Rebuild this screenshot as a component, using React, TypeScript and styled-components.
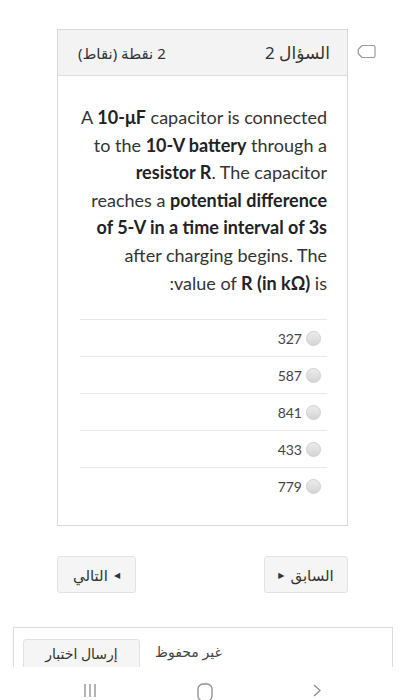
import React from "react";
import styled, { createGlobalStyle } from "styled-components";

const Global = createGlobalStyle`
  html, body { margin: 0; padding: 0; background: #fff; }
  body { font-family: Lato, "DejaVu Sans", sans-serif; color: #333; }
`;

const Page = styled.div`
  width: 405px;
  height: 700px;
  overflow: hidden;
  display: flex;
  flex-direction: column;
  background: #fff;
`;

const QuestionRow = styled.div`
  display: flex;
  align-items: flex-start;
  padding: 29px 0 0 57px;
  gap: 9px;
`;

const Card = styled.div`
  width: 291px;
  box-sizing: border-box;
  border: 1px solid #d9d9d9;
  background: #fff;
`;

const CardHeader = styled.div`
  direction: rtl;
  height: 45px;
  background: #f3f3f3;
  border-bottom: 1px solid #dedede;
  display: flex;
  align-items: center;
  justify-content: space-between;
  padding: 0 17px 0 20px;
`;

const QTitle = styled.span`
  font-family: "Noto Sans", "DejaVu Sans", sans-serif;
  font-size: 17px;
  color: #333;
`;

const QPoints = styled.span`
  font-family: "Noto Sans", "DejaVu Sans", sans-serif;
  font-size: 15px;
  color: #333;
`;

const FlagBox = styled.div`
  padding-top: 15px;
  color: #9a9a9a;
  display: flex;
`;

const QText = styled.p`
  text-align: right;
  margin: 0;
  padding: 28px 20px 0 12px;
  font-size: 18px;
  line-height: 27.6px;
  color: #333;
  b { font-weight: 700; color: #222; }
`;

const Options = styled.div`
  margin: 22px 20px 21px 22px;
`;

const Option = styled.label`
  direction: rtl;
  display: flex;
  align-items: center;
  box-sizing: border-box;
  height: 37px;
  border-top: 1px solid #e8e8e8;
  padding-right: 6px;
  gap: 4px;
  font-size: 14px;
  color: #444;
`;

const Radio = styled.span`
  width: 15px;
  height: 15px;
  border-radius: 50%;
  box-sizing: border-box;
  border: 1px solid #cfcfcf;
  background: linear-gradient(#ececec, #d4d4d4);
`;

const NavRow = styled.div`
  display: flex;
  justify-content: space-between;
  padding: 30px 57px 0 57px;
`;

const NavButton = styled.button<{ $w: number }>`
  width: ${(p) => p.$w}px;
  height: 37px;
  box-sizing: border-box;
  border: 1px solid #e2e2e2;
  border-radius: 3px;
  background: #f5f5f5;
  display: flex;
  align-items: center;
  justify-content: center;
  gap: 6px;
  font-family: "Noto Sans", "DejaVu Sans", sans-serif;
  font-size: 15px;
  color: #333;
  padding: 0;
`;

const Tri = styled.span`
  font-size: 8px;
  color: #333;
`;

const Footer = styled.div`
  margin: 34px 12px 0 13px;
  height: 42px;
  box-sizing: border-box;
  border: 1px solid #dcdcdc;
  border-bottom: none;
  display: flex;
  align-items: flex-start;
  padding: 11px 0 0 9px;
  gap: 15px;
  overflow: hidden;
`;

const SubmitButton = styled.button`
  width: 117px;
  height: 40px;
  box-sizing: border-box;
  border: 1px solid #e2e2e2;
  border-radius: 3px;
  background: #f5f5f5;
  font-family: "Noto Sans", "DejaVu Sans", sans-serif;
  font-size: 14px;
  line-height: 20px;
  color: #333;
  padding: 0 0 10px 0;
  direction: rtl;
`;

const Unsaved = styled.span`
  font-family: "Noto Sans", "DejaVu Sans", sans-serif;
  font-size: 14px;
  line-height: 20px;
  color: #444;
  padding-top: 3px;
  direction: rtl;
`;

const SystemBar = styled.div`
  flex: 1;
  background: #fff;
  display: flex;
  justify-content: space-between;
  align-items: flex-start;
  padding: 15px 82px 0 82px;
  color: #8c8c8c;
`;

const options = ["327", "587", "841", "433", "779"];

export default function App() {
  return (
    <Page>
      <Global />
      <QuestionRow>
        <Card>
          <CardHeader>
            <QTitle>السؤال 2</QTitle>
            <QPoints>2 نقطة (نقاط)</QPoints>
          </CardHeader>
          <QText>
            A <b>10-μF</b> capacitor is connected
            <br />
            to the <b>10-V battery</b> through a
            <br />
            <b>resistor R</b>. The capacitor
            <br />
            reaches a <b>potential difference</b>
            <br />
            <b>of 5-V in a time interval of 3s</b>
            <br />
            after charging begins. The
            <br />
            :value of <b>R (in kΩ)</b> is
          </QText>
          <Options>
            {options.map((o) => (
              <Option key={o}>
                <Radio />
                <span>{o}</span>
              </Option>
            ))}
          </Options>
        </Card>
        <FlagBox>
          <svg width="19" height="15" viewBox="0 0 19 15" fill="none">
            <path
              d="M5 1.5 H16.5 a1.5 1.5 0 0 1 1.5 1.5 V12 a1.5 1.5 0 0 1 -1.5 1.5 H5 L1.2 9.5 V5.5 Z"
              stroke="currentColor"
              strokeWidth="1.2"
              strokeLinejoin="round"
            />
          </svg>
        </FlagBox>
      </QuestionRow>
      <NavRow>
        <NavButton $w={79}>
          <span>التالي</span>
          <Tri>◀</Tri>
        </NavButton>
        <NavButton $w={84}>
          <Tri>▶</Tri>
          <span>السابق</span>
        </NavButton>
      </NavRow>
      <Footer>
        <SubmitButton>إرسال اختبار</SubmitButton>
        <Unsaved>غير محفوظ</Unsaved>
      </Footer>
      <SystemBar>
        <svg width="16" height="16" viewBox="0 0 16 16">
          <path d="M3 2 V15 M8 2 V15 M13 2 V15" stroke="currentColor" strokeWidth="1.3" />
        </svg>
        <svg width="18" height="18" viewBox="0 0 18 18" fill="none">
          <rect x="2" y="2" width="14" height="17" rx="5" stroke="currentColor" strokeWidth="1.3" />
        </svg>
        <svg width="12" height="16" viewBox="0 0 12 16" fill="none">
          <path d="M3 3 L9 8.5 L3 14" stroke="currentColor" strokeWidth="1.3" />
        </svg>
      </SystemBar>
    </Page>
  );
}
